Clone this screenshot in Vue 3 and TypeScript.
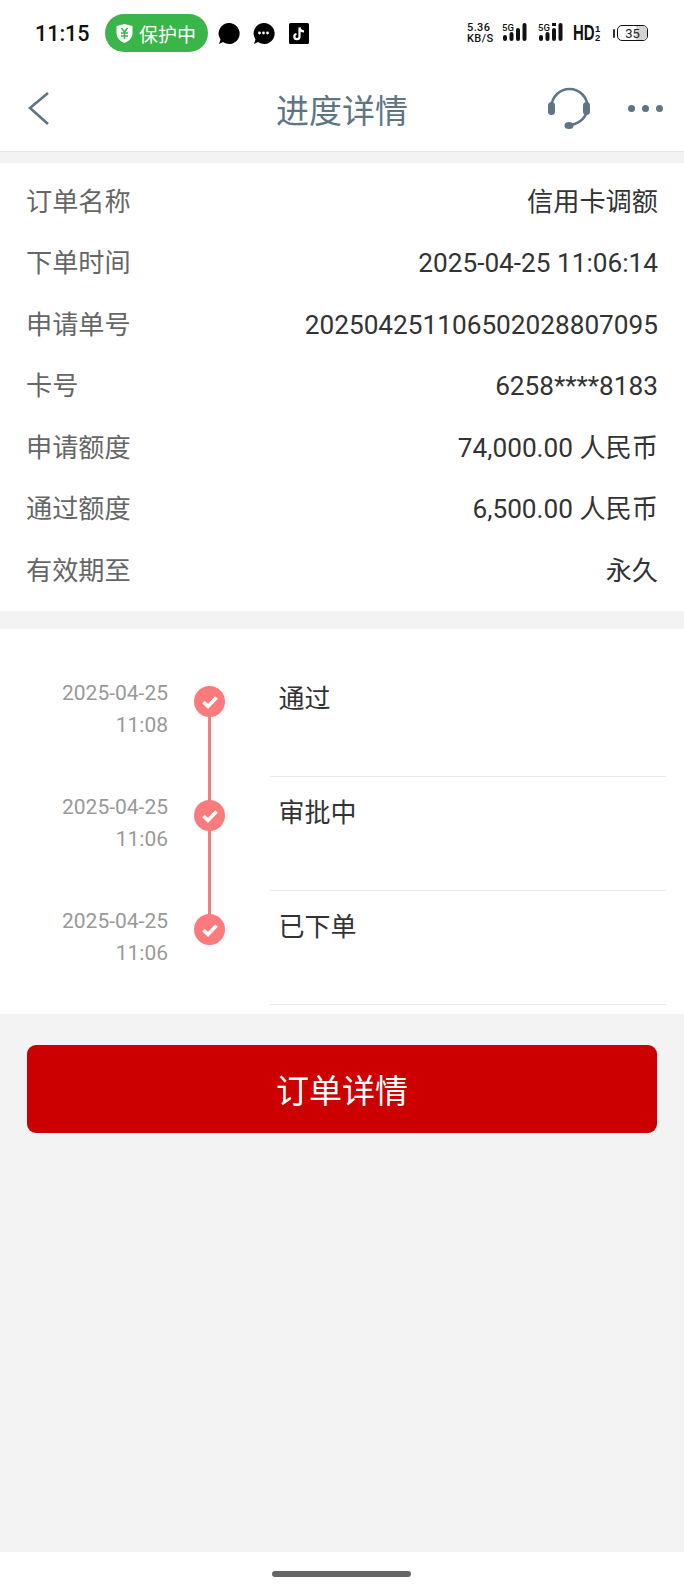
<script setup lang="ts">
interface Row { label: string; value: string }
interface Step { date: string; time: string; title: string; last?: boolean }
const rows: Row[] = [
  { label: '订单名称', value: '信用卡调额' },
  { label: '下单时间', value: '2025-04-25 11:06:14' },
  { label: '申请单号', value: '202504251106502028807095' },
  { label: '卡号', value: '6258****8183' },
  { label: '申请额度', value: '74,000.00 人民币' },
  { label: '通过额度', value: '6,500.00 人民币' },
  { label: '有效期至', value: '永久' }
]
const steps: Step[] = [
  { date: '2025-04-25', time: '11:08', title: '通过' },
  { date: '2025-04-25', time: '11:06', title: '审批中' },
  { date: '2025-04-25', time: '11:06', title: '已下单', last: true }
]
</script>

<template>
  <div class="page">
    <div class="status">
      <span class="clock">11:15</span>
      <span class="pill">
        <svg width="19" height="21" viewBox="0 0 19 21"><path d="M9.5 1 L17.5 3 V10 C17.5 15 13.5 18.5 9.5 20 C5.5 18.5 1.5 15 1.5 10 V3 Z" fill="#fff"/><path d="M6.5 5 L9.5 9 L12.5 5 M6 10 H13 M6 13 H13 M9.5 9 V16" stroke="#39b54a" stroke-width="1.5" fill="none"/></svg>
        <span>保护中</span>
      </span>
      <svg class="app" width="23" height="23" viewBox="0 0 23 23"><path d="M11.5 1 A10.5 10.5 0 1 1 6 20 L2 22 L3.5 17.5 A10.5 10.5 0 0 1 11.5 1 Z" fill="#000"/></svg>
      <svg class="app msg" width="23" height="23" viewBox="0 0 23 23"><path d="M11.5 1 A10.5 10.5 0 1 1 6 20 L2 22 L3.5 17.5 A10.5 10.5 0 0 1 11.5 1 Z" fill="#000"/><circle cx="7.5" cy="11" r="1.4" fill="#fff"/><circle cx="11.5" cy="11" r="1.4" fill="#fff"/><circle cx="15.5" cy="11" r="1.4" fill="#fff"/></svg>
      <svg class="app tt" width="20" height="21" viewBox="0 0 20 21"><rect width="20" height="21" rx="1.5" fill="#000"/><path d="M10.5 4.5 V13.5 A2.6 2.6 0 1 1 7.5 11 M10.5 4.5 C11 7 12.5 8.3 15 8.5" stroke="#fff" stroke-width="2.2" fill="none"/></svg>
      <div class="status-right">
        <span class="speed"><span>5.36</span><span>KB/S</span></span>
        <span class="net">
          <span class="g">5G</span>
          <svg width="24" height="18" viewBox="0 0 24 18"><rect x="0" y="12" width="4" height="6" rx="2"/><rect x="6.5" y="9" width="4" height="9" rx="2"/><rect x="13" y="5" width="4" height="13" rx="2"/><rect x="19.5" y="0" width="4" height="18" rx="2"/></svg>
        </span>
        <span class="net second">
          <span class="g">5G</span>
          <svg width="24" height="18" viewBox="0 0 24 18"><rect x="0" y="12" width="4" height="6" rx="2"/><rect x="6.5" y="9" width="4" height="9" rx="2"/><rect x="13" y="5" width="4" height="13" rx="2"/><rect x="13" y="0" width="4" height="3"/><rect x="19.5" y="0" width="4" height="18" rx="2"/></svg>
        </span>
        <span class="hd"><span class="hd-text">HD</span><span class="sub"><i>1</i><i>2</i></span></span>
        <span class="batt">
          <span class="nub"></span>
          <span class="cell"><span class="fill"></span><span class="num">35</span></span>
        </span>
      </div>
    </div>

    <header class="nav">
      <svg class="back" width="24" height="36" viewBox="0 0 24 36"><path d="M21 3 L3 18 L21 34" fill="none" stroke="#5e7684" stroke-width="2.6"/></svg>
      <h1>进度详情</h1>
      <svg class="cs" width="46" height="46" viewBox="0 0 46 46"><path d="M5.5 21 A18 18 0 0 1 41.5 21 C41.5 30 35 37 25 39" fill="none" stroke="#5e7684" stroke-width="2.6"/><rect x="2" y="16" width="7" height="13" rx="3.5" fill="#5e7684"/><rect x="37" y="16" width="7" height="13" rx="3.5" fill="#5e7684"/><ellipse cx="23" cy="39.5" rx="4.5" ry="3.5" fill="#5e7684"/></svg>
      <span class="dots"><i></i><i></i><i></i></span>
    </header>

    <section class="info">
      <div v-for="r in rows" :key="r.label" class="row">
        <span class="label">{{ r.label }}</span>
        <span class="value">{{ r.value }}</span>
      </div>
    </section>

    <section class="timeline">
      <div v-for="(s, i) in steps" :key="i" class="step">
        <div class="when">
          <div>{{ s.date }}</div>
          <div>{{ s.time }}</div>
        </div>
        <div class="axis">
          <span v-if="!s.last" class="line"></span>
          <svg class="dot" width="31" height="31" viewBox="0 0 31 31"><circle cx="15.5" cy="15.5" r="15.5" fill="#fb7a7c"/><path d="M9.5 16 L14 20.5 L22.5 11.5" fill="none" stroke="#fff" stroke-width="3.6"/></svg>
        </div>
        <div class="what"><span>{{ s.title }}</span></div>
      </div>
    </section>

    <div class="action">
      <button type="button" class="btn">订单详情</button>
    </div>

    <div class="spacer"></div>

    <div class="home"><span></span></div>
  </div>
</template>

<style>
html, body { margin: 0; padding: 0; background: #f3f3f3; }
</style>

<style scoped>
.page {
  width: 684px;
  height: 1596px;
  display: flex;
  flex-direction: column;
  background: #f3f3f3;
  font-family: Roboto, "Noto Sans CJK SC", sans-serif;
  overflow: hidden;
}
.status {
  height: 66px;
  flex: none;
  background: #fff;
  display: flex;
  align-items: center;
  padding: 0 0 0 35px;
  box-sizing: border-box;
}
.clock { font-size: 21.5px; font-weight: 500; color: #111; width: 70px; }
.pill {
  width: 103px;
  height: 38px;
  border-radius: 19px;
  background: #39b54a;
  color: #fff;
  display: flex;
  align-items: center;
  gap: 5px;
  padding-left: 10px;
  box-sizing: border-box;
  font-size: 19px;
  flex: none;
}
.app { flex: none; }
.pill + .app { margin-left: 9px; }
.msg { margin-left: 12px; }
.tt { margin-left: 14px; }
.status-right {
  margin-left: auto;
  padding-right: 36px;
  display: flex;
  align-items: center;
  color: #111;
}
.speed {
  display: flex;
  flex-direction: column;
  font-size: 11px;
  line-height: 11px;
  letter-spacing: 0.4px;
  font-weight: 500;
  width: 27px;
  white-space: nowrap;
}
.net { position: relative; display: flex; align-items: flex-start; margin-left: 8px; height: 20px; width: 26px; }
.net.second { margin-left: 10px; }
.net svg { fill: #111; margin-left: 1px; }
.net .g { position: absolute; left: 0; top: 0; font-size: 9.5px; line-height: 9px; font-weight: 500; }
.hd {
  display: flex;
  align-items: center;
  width: 28px;
  margin-left: 9px;
  font-family: "Liberation Sans", sans-serif;
  font-weight: 700;
}
.hd-text { font-size: 22px; line-height: 20px; width: 21px; display: inline-block; transform: scaleX(0.68); transform-origin: left center; }
.sub { display: flex; flex-direction: column; font-size: 9.5px; line-height: 9px; margin-left: 1px; }
.sub i { font-style: normal; }
.batt { display: flex; align-items: center; margin-left: 12px; }
.nub { width: 2px; height: 9px; background: #333; margin-right: 2px; border-radius: 1px; }
.cell {
  position: relative;
  width: 31px;
  height: 16px;
  border: 1.5px solid #111;
  border-radius: 5px;
  overflow: hidden;
  display: flex;
  align-items: center;
  justify-content: center;
  box-sizing: border-box;
}
.fill { position: absolute; top: 0; right: 0; bottom: 0; width: 11px; background: #d4d4d4; }
.num { position: relative; font-size: 13px; color: #222; }
.nav {
  position: relative;
  height: 85px;
  flex: none;
  background: #fff;
  border-bottom: 1px solid #e4e4e4;
  display: flex;
  align-items: center;
  justify-content: center;
}
.nav h1 { margin: 0; font-size: 33px; font-weight: 400; color: #5e7684; }
.back { position: absolute; left: 27px; top: 24px; }
.cs { position: absolute; left: 546px; top: 20px; }
.dots { position: absolute; left: 628px; top: 39px; display: flex; gap: 7px; }
.dots i { width: 7px; height: 7px; border-radius: 50%; background: #5e7684; }
.info {
  flex: none;
  margin-top: 11px;
  background: #fff;
  padding: 6px 26px 11px;
}
.row {
  height: 61.5px;
  display: flex;
  align-items: center;
  justify-content: space-between;
  font-size: 26.2px;
}
.label { color: #666; }
.value { color: #333; line-height: 38px; margin-top: 4px; }
.timeline {
  flex: none;
  margin-top: 18px;
  background: #fff;
  padding: 34px 0 9px;
}
.step { display: flex; height: 114px; }
.when {
  width: 168px;
  flex: none;
  text-align: right;
  color: #999;
  font-size: 21px;
  line-height: 32px;
  padding-top: 14px;
  box-sizing: border-box;
}
.axis { position: relative; width: 102px; flex: none; }
.dot { position: absolute; left: 25.5px; top: 23px; }
.line { position: absolute; left: 39.5px; top: 30px; width: 3px; height: 114px; background: #f07d80; }
.what {
  flex: 1;
  margin-right: 18px;
  border-bottom: 1px solid #e8e8e8;
  padding: 17.5px 0 0 8.5px;
  font-size: 26px;
  line-height: 38px;
  color: #333;
}
.action { flex: none; padding: 31px 27px 0; }
.btn {
  display: block;
  width: 100%;
  height: 88px;
  border: 0;
  border-radius: 9px;
  background: #cc0000;
  color: #fff;
  font-family: inherit;
  font-size: 33px;
  padding: 0;
}
.spacer { flex: 1; }
.home {
  height: 44px;
  flex: none;
  background: #fff;
  display: flex;
  justify-content: center;
  padding-top: 19px;
  box-sizing: border-box;
}
.home span { width: 139px; height: 6px; border-radius: 3px; background: #666; margin-right: 2px; }
</style>
